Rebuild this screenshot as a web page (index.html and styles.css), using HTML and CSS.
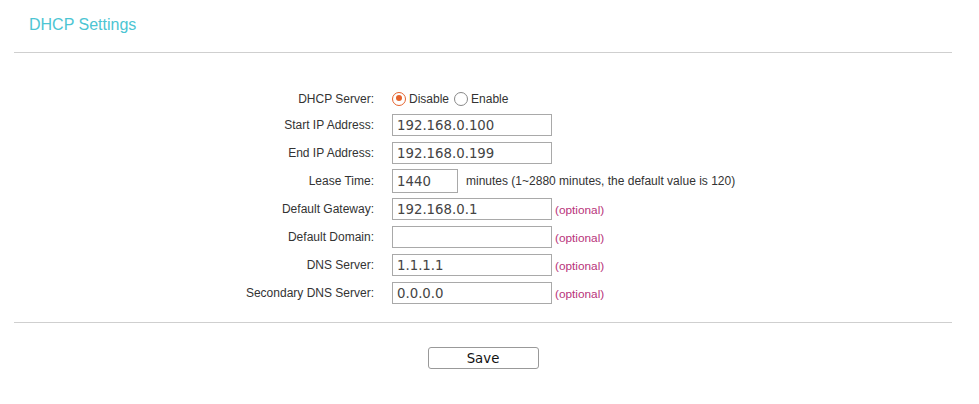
FILE: index.html
```html
<!DOCTYPE html>
<html>
<head>
<meta charset="utf-8">
<link rel="stylesheet" href="styles.css">
</head>
<body>
<div class="page">
  <h1 class="title">DHCP Settings</h1>
  <div class="rule"></div>
  <form class="form">
    <label class="lbl">DHCP Server:</label>
    <div class="ctl radios">
      <span class="radio on"></span><span class="rtext">Disable</span>
      <span class="radio"></span><span class="rtext">Enable</span>
    </div>

    <label class="lbl">Start IP Address:</label>
    <div class="ctl"><input class="field" type="text" value="192.168.0.100"></div>

    <label class="lbl">End IP Address:</label>
    <div class="ctl"><input class="field" type="text" value="192.168.0.199"></div>

    <label class="lbl">Lease Time:</label>
    <div class="ctl"><input class="field short" type="text" value="1440"><span class="hint">minutes (1~2880 minutes, the default value is 120)</span></div>

    <label class="lbl">Default Gateway:</label>
    <div class="ctl"><input class="field" type="text" value="192.168.0.1"><span class="opt">(optional)</span></div>

    <label class="lbl">Default Domain:</label>
    <div class="ctl"><input class="field" type="text" value=""><span class="opt">(optional)</span></div>

    <label class="lbl">DNS Server:</label>
    <div class="ctl"><input class="field" type="text" value="1.1.1.1"><span class="opt">(optional)</span></div>

    <label class="lbl">Secondary DNS Server:</label>
    <div class="ctl"><input class="field" type="text" value="0.0.0.0"><span class="opt">(optional)</span></div>
  </form>
  <div class="rule bottom"></div>
  <div class="actions"><button class="save" type="button">Save</button></div>
</div>
</body>
</html>
```

FILE: styles.css
```css
html, body {
  margin: 0;
  padding: 0;
  background: #fff;
}
.page {
  width: 979px;
  font-family: "Liberation Sans", Arial, sans-serif;
  color: #333;
}
.title {
  margin: 0;
  padding: 16px 0 0 29px;
  height: 38px;
  box-sizing: border-box;
  font-size: 16px;
  font-weight: normal;
  line-height: 18px;
  color: #4cc5d3;
}
.rule {
  height: 1px;
  background: #cfcfcf;
  margin: 14px 27px 0 14px;
}
.rule.bottom {
  margin-top: 18px;
}
.form {
  display: grid;
  grid-template-columns: 374px auto;
  column-gap: 18px;
  row-gap: 6px;
  grid-template-rows: 19px;
  grid-auto-rows: 22px;
  align-items: center;
  margin: 36px 0 0 0;
}
.lbl {
  text-align: right;
  font-size: 12px;
  color: #333;
  white-space: nowrap;
}
.ctl {
  display: flex;
  align-items: center;
  height: 100%;
}
.field {
  box-sizing: border-box;
  width: 160px;
  height: 22px;
  margin: 0;
  padding: 0 4px;
  border: 1px solid #a9a9a9;
  border-radius: 0;
  font-family: "DejaVu Sans", sans-serif;
  font-size: 13.3px;
  color: #444;
  background: #fff;
  outline: none;
}
.field.short {
  width: 66px;
  height: 24px;
}
.hint {
  margin-left: 8px;
  font-size: 12px;
  color: #333;
  white-space: nowrap;
}
.opt {
  margin-left: 3px;
  margin-top: 2px;
  font-size: 11.8px;
  color: #b8327a;
}
.radios {
  gap: 0;
}
.radio {
  box-sizing: border-box;
  width: 14px;
  height: 14px;
  border-radius: 50%;
  border: 1.5px solid #888;
  background: #fff;
  position: relative;
}
.radio.on {
  border-color: #e5622c;
}
.radio.on::after {
  content: "";
  position: absolute;
  left: 2.5px;
  top: 2.5px;
  width: 6px;
  height: 6px;
  border-radius: 50%;
  background: #e5622c;
}
.rtext {
  font-size: 12px;
  color: #333;
  margin-left: 3px;
  margin-right: 5px;
}
.actions {
  display: flex;
  justify-content: center;
  width: 966px;
  padding-top: 24px;
}
.save {
  box-sizing: border-box;
  width: 111px;
  height: 22px;
  border: 1px solid #999;
  border-radius: 3px;
  background: #fff;
  font-family: "DejaVu Sans", sans-serif;
  font-size: 13.3px;
  color: #111;
  padding: 0;
}
```
